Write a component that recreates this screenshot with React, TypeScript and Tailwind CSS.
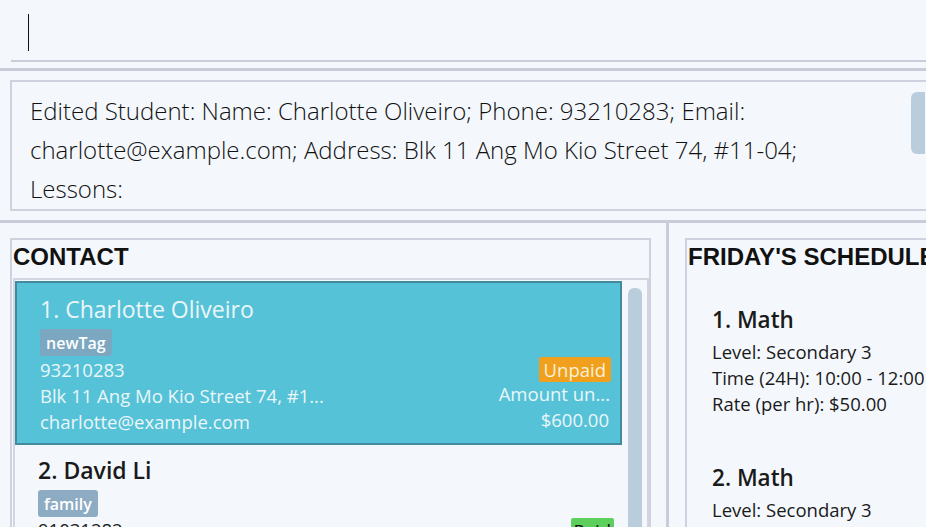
import React from "react";

const body = "font-['Open_Sans','Noto_Sans',sans-serif]";
const heading = "font-['Liberation_Sans',Arial,sans-serif]";

function CommandBox() {
  return (
    <div className="h-[68px] pl-[11px] flex flex-col">
      <div className="h-[62px] border-b-2 border-[#c9ccd9] pl-[17px] pt-[14px]">
        <div className="w-[1px] h-[37px] bg-[#111]" />
      </div>
    </div>
  );
}

function ResultBox() {
  return (
    <div className="pl-[10px] pt-[9px] pb-[9px]">
      <div className="relative h-[131px] border-2 border-r-0 border-[#cfd2de] flex">
        <div className={`flex-1 pl-[18px] pt-[9px] text-[24px] leading-[39px] font-light text-[#111] whitespace-nowrap ${body}`}>
          <div>Edited Student: Name: Charlotte Oliveiro; Phone: 93210283; Email:</div>
          <div>charlotte@example.com; Address: Blk 11 Ang Mo Kio Street 74, #11-04;</div>
          <div>Lessons:</div>
        </div>
        <div className="w-[15px] pt-[10px]">
          <div className="h-[62px] w-[14px] rounded-l-md bg-[#b9cddd]" />
        </div>
      </div>
    </div>
  );
}

function Tag({ label, color }: { label: string; color: string }) {
  return (
    <span className={`inline-flex items-center h-[27px] px-[6px] rounded-[3px] text-white text-[16px] font-semibold ${color}`}>
      {label}
    </span>
  );
}

function SelectedCard() {
  return (
    <div className={`h-[164px] border-2 border-[#438a9f] bg-[#56c2d7] pl-[23px] pr-[9px] pt-[11px] text-[#eaf6f9] ${body}`}>
      <div className="h-[30px] leading-[30px] text-[23px]">1. Charlotte Oliveiro</div>
      <div className="mt-[5px] flex">
        <Tag label="newTag" color="bg-[#7ba7c0]" />
      </div>
      <div className="pt-[1px] flex justify-between text-[18.5px] leading-[26px]">
        <div className="flex flex-col whitespace-nowrap">
          <span>93210283</span>
          <span>Blk 11 Ang Mo Kio Street 74, #1...</span>
          <span>charlotte@example.com</span>
        </div>
        <div className="flex flex-col items-end whitespace-nowrap">
          <span className="h-[25px] leading-[25px] px-[5px] rounded-[2px] bg-[#f0a01c] text-[#fbf0d8]">Unpaid</span>
          <span className="-mt-[1px] pr-[1px]">Amount un...</span>
          <span className="pr-[2px]">$600.00</span>
        </div>
      </div>
    </div>
  );
}

function PlainCard() {
  return (
    <div className={`pl-[23px] pr-[8px] pt-[10px] text-[#1a1a1a] ${body}`}>
      <div className="h-[30px] leading-[30px] text-[23px] font-semibold">2. David Li</div>
      <div className="mt-[5px] flex">
        <Tag label="family" color="bg-[#8eabc4]" />
      </div>
      <div className="flex justify-between text-[18.5px] leading-[26px]">
        <span>91031282</span>
        <span className="mt-[1px] h-[25px] leading-[25px] px-[3px] rounded-[2px] bg-[#5ccf5c] text-[#111]">Paid</span>
      </div>
    </div>
  );
}

function ContactPanel() {
  return (
    <div className="w-[666px] pl-[10px] pr-[15px] pt-[15px] flex flex-col">
      <div className="flex-1 border-2 border-b-0 border-[#cfd2de] pl-[1px] flex flex-col">
        <div className={`h-[38px] leading-[34px] text-[24px] font-bold text-[#111] ${heading}`}>CONTACT</div>
        <div className="flex-1 border-2 border-b-0 border-[#d3d6e0] pt-[1px] flex">
          <div className="w-[607px] flex flex-col">
            <SelectedCard />
            <PlainCard />
          </div>
          <div className="flex-1 pl-[6px] pt-[7px]">
            <div className="h-full w-[14px] rounded-t-md bg-[#b9cddd]" />
          </div>
        </div>
      </div>
    </div>
  );
}

function Lesson({ n }: { n: number }) {
  return (
    <div className={`pl-[24px] pt-[27px] pb-[19px] text-[#1a1a1a] ${body}`}>
      <div className="h-[30px] leading-[30px] text-[22.5px] font-semibold">{n}. Math</div>
      <div className="mt-[4px] text-[18.5px] leading-[26px] whitespace-nowrap">
        <div>Level: Secondary 3</div>
        <div>Time (24H): 10:00 - 12:00</div>
        <div>Rate (per hr): $50.00</div>
      </div>
    </div>
  );
}

function SchedulePanel() {
  return (
    <div className="flex-1 pl-[16px] pt-[15px] flex flex-col min-w-0">
      <div className="flex-1 border-2 border-r-0 border-b-0 border-[#cfd2de] pl-[1px] overflow-hidden">
        <div className={`h-[38px] leading-[34px] text-[24px] font-bold text-[#111] whitespace-nowrap ${heading}`}>
          FRIDAY'S SCHEDULE
        </div>
        <Lesson n={1} />
        <Lesson n={2} />
      </div>
    </div>
  );
}

export default function App() {
  return (
    <div className="w-[926px] h-[527px] overflow-hidden bg-[#f4f8fc] flex flex-col">
      <CommandBox />
      <div className="h-[3px] bg-[#c9ccd9]" />
      <ResultBox />
      <div className="h-[3px] bg-[#c9ccd9]" />
      <div className="flex-1 flex min-h-0">
        <ContactPanel />
        <div className="w-[3px] bg-[#c9ccd9]" />
        <SchedulePanel />
      </div>
    </div>
  );
}
